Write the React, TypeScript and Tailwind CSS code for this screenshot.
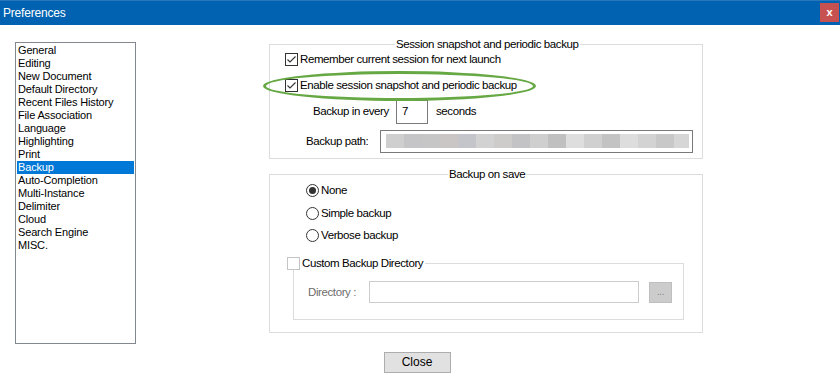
import React from "react";

const items = [
  "General",
  "Editing",
  "New Document",
  "Default Directory",
  "Recent Files History",
  "File Association",
  "Language",
  "Highlighting",
  "Print",
  "Backup",
  "Auto-Completion",
  "Multi-Instance",
  "Delimiter",
  "Cloud",
  "Search Engine",
  "MISC.",
];

const blur = [
  "bg-[#cfcfcf] w-[18px]",
  "bg-[#c5c5c7] w-[18px]",
  "bg-[#c6c6c6] w-[18px]",
  "bg-[#cac6c6] w-[18px]",
  "bg-[#c3c5ca] w-[18px]",
  "bg-[#d2d2d2] w-[18px]",
  "bg-[#cecbcb] w-[18px]",
  "bg-[#c3c3c5] w-[18px]",
  "bg-[#cfcfcf] w-[18px]",
  "bg-[#c0c0c0] w-[18px]",
  "bg-[#dedede] w-[18px]",
  "bg-[#d0d0d0] w-[18px]",
  "bg-[#c3c3c3] w-[18px]",
  "bg-[#dddddd] w-[18px]",
  "bg-[#d3d3d3] w-[18px]",
  "bg-[#c8c8c8] w-[18px]",
  "bg-[#d6d6d6] w-[15px]",
];

function Check({ checked, light }: { checked?: boolean; light?: boolean }) {
  return (
    <span
      className={
        "w-[13px] h-[13px] shrink-0 border bg-white flex items-center justify-center " +
        (light ? "border-[#c4c4c4]" : "border-[#333333]")
      }
    >
      {checked && (
        <svg width="11" height="11" viewBox="0 0 11 11">
          <path d="M1.5 5.5 L4 8 L9.5 2.5" fill="none" stroke="#333" strokeWidth="1.1" />
        </svg>
      )}
    </span>
  );
}

function Radio({ checked }: { checked?: boolean }) {
  return (
    <span className="w-[13px] h-[13px] shrink-0 rounded-full border border-[#333333] bg-white flex items-center justify-center">
      {checked && <span className="w-[7px] h-[7px] rounded-full bg-[#333333]" />}
    </span>
  );
}

export default function App() {
  return (
    <div className="relative w-[840px] h-[384px] bg-white overflow-hidden font-['Liberation_Sans',Arial,sans-serif] text-black">
      {/* Title bar */}
      <div className="h-[25px] bg-[#0062B0] border-t border-t-[#2a75bb] flex items-start justify-between">
        <span className="pl-[3px] pt-[5px] text-white text-[12px] leading-[14px] tracking-[-0.2px]">Preferences</span>
        <div className="mt-[2px] mr-[1px] w-[19px] h-[19px] bg-[#C75050] flex items-center justify-center text-white text-[11px] font-bold leading-none">
          x
        </div>
      </div>

      <div className="flex items-start">
        {/* List */}
        <div className="ml-[15px] mt-[17px] w-[121px] h-[302px] border border-[#828790] pt-[1px] px-[1px] text-[11px] tracking-[-0.15px]">
          {items.map((it) => (
            <div
              key={it}
              className={
                "h-[13px] leading-[13px] pl-[1px] whitespace-nowrap " +
                (it === "Backup" ? "bg-[#0078D7] text-white" : "")
              }
            >
              {it}
            </div>
          ))}
        </div>

        {/* Right panel */}
        <div className="ml-[133px] mt-[11px] w-[434px] text-[11.5px] tracking-[-0.4px]">
          <fieldset className="border border-[#dcdcdc] px-0 pb-[5px]">
            <legend className="px-[1px] leading-[16px] ml-[125px]">Session snapshot and periodic backup</legend>
            <div className="mt-[1px] h-[13px] pl-[15px] flex items-center gap-[2px]">
              <Check checked />
              <span className="leading-[13px]">Remember current session for next launch</span>
            </div>
            <div className="mt-[13px] h-[13px] pl-[15px] flex items-center gap-[2px]">
              <Check checked />
              <span className="leading-[13px]">Enable session snapshot and periodic backup</span>
            </div>
            <div className="mt-[8px] h-[24px] flex items-center">
              <span className="ml-[43px] w-[83px] whitespace-nowrap">Backup in every</span>
              <div className="w-[32px] h-[24px] border border-[#7a7a7a] pl-[5px] leading-[20px]">7</div>
              <span className="ml-[8px]">seconds</span>
            </div>
            <div className="mt-[6px] h-[23px] flex items-center">
              <span className="ml-[36px] w-[74px] whitespace-nowrap">Backup path:</span>
              <div className="w-[313px] h-[23px] border border-[#7a7a7a] pl-[5px] pt-[3px] flex">
                {blur.map((c, i) => (
                  <span key={i} className={"h-[14px] " + c} />
                ))}
              </div>
            </div>
          </fieldset>

          <fieldset className="mt-[7px] border border-[#dcdcdc] px-0 pb-[12px]">
            <legend className="px-[1px] leading-[16px] ml-[178px]">Backup on save</legend>
            <div className="mt-[2px] h-[13px] pl-[36px] flex items-center gap-[2px]">
              <Radio checked />
              <span className="leading-[13px]">None</span>
            </div>
            <div className="mt-[10px] h-[13px] pl-[36px] flex items-center gap-[2px]">
              <Radio />
              <span className="leading-[13px]">Simple backup</span>
            </div>
            <div className="mt-[9px] h-[13px] pl-[36px] flex items-center gap-[2px]">
              <Radio />
              <span className="leading-[13px]">Verbose backup</span>
            </div>

            <fieldset className="mt-[14px] ml-[23px] w-[391px] border border-[#dcdcdc] px-0 pb-[16px]">
              <legend className="ml-[-7px] pr-[2px] h-[14px] flex items-center gap-[2px]">
                <Check light />
                <span className="leading-[13px]">Custom Backup Directory</span>
              </legend>
              <div className="mt-[11px] flex items-start">
                <span className="ml-[14px] w-[61px] h-[22px] leading-[22px] text-[#6d6d6d] whitespace-nowrap">Directory :</span>
                <div className="w-[270px] h-[22px] border border-[#cccccc]" />
                <div className="ml-[10px] mt-[1px] w-[23px] h-[21px] bg-[#cccccc] border border-[#bfbfbf] text-[#8a8a8a] text-[10px] leading-[17px] text-center">
                  ...
                </div>
              </div>
            </fieldset>
          </fieldset>
        </div>
      </div>

      {/* Close */}
      <div className="mt-[8px] flex justify-center">
        <button className="mr-[6px] w-[67px] h-[21px] bg-[#e1e1e1] border border-[#adadad] text-[12px] leading-[19px]">
          Close
        </button>
      </div>

      {/* Green annotation ellipse */}
      <div className="absolute left-[263px] top-[71px] w-[273px] h-[30px] rounded-[50%] border-[3px] border-[#66a844]" />
    </div>
  );
}
